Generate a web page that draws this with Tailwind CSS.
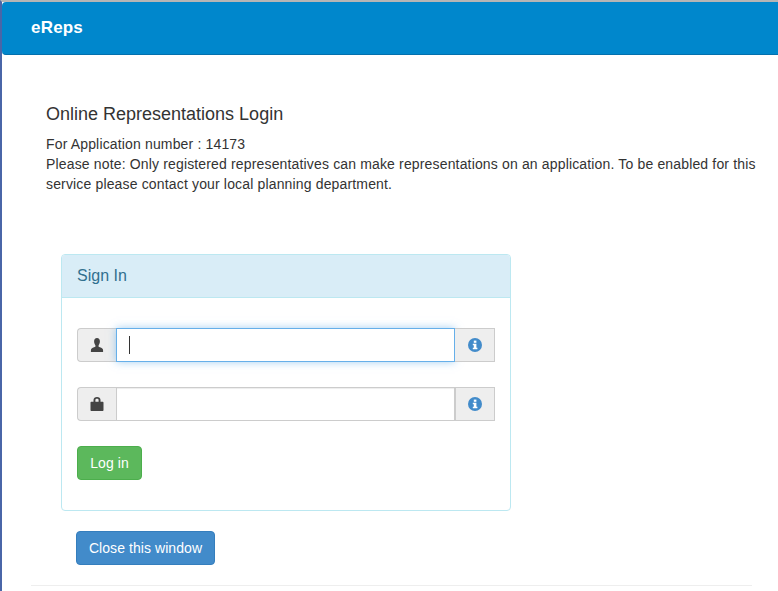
<!DOCTYPE html>
<html>
<head>
<meta charset="utf-8">
<script src="https://cdn.jsdelivr.net/npm/@tailwindcss/browser@4"></script>
</head>
<body class="h-[591px] w-[778px] overflow-hidden bg-white font-['Liberation_Sans',Arial,sans-serif] text-[14px] leading-[20px] text-[#333]">
<div class="flex h-[591px] flex-col border-l-2 border-l-[#4a66a8] border-t-2 border-t-[#b5b5b5]">
  <header class="flex h-[53px] shrink-0 items-center rounded-[4px] rounded-r-none border-b border-[#0370ad] bg-[#0087cc] pl-[29px]">
    <span class="text-[17px] font-bold tracking-[0.2px] text-white">eReps</span>
  </header>
  <main class="flex flex-col pt-[49px]">
    <div class="pl-[44px]">
      <h1 class="text-[18px] leading-[20px] font-normal text-[#333]">Online Representations Login</h1>
      <p class="mt-[10px] w-[725px] tracking-[0.155px] text-[#333]">For Application number : 14173<br>Please note: Only registered representatives can make representations on an application. To be enabled for this service please contact your local planning department.</p>
    </div>
    <section class="ml-[59px] mt-[60px] h-[257px] w-[450px] rounded-[4px] border border-[#bce8f1]">
      <div class="flex h-[43px] items-center rounded-t-[3px] border-b border-[#bce8f1] bg-[#d9edf7] pl-[15px] text-[16px] text-[#31708f]">Sign In</div>
      <div class="flex flex-col pl-[15px] pt-[30px]">
        <div class="flex h-[34px] w-[418px]">
          <span class="flex w-[39px] items-center justify-center rounded-l-[4px] border border-r-0 border-[#ccc] bg-[#eee]">
            <svg class="h-[14px] w-[14px]" viewBox="0 0 14 14"><path fill="#444" d="M7 0c1.900 0 2.900 1.400 2.900 3.500 0 1.500-.6 2.900-1.300 3.800v1.500c1.700.7 3.900 1.300 4.300 2.400.2.600.2 1.700.2 2.800H.9c0-1.100 0-2.200.2-2.800.4-1.100 2.600-1.700 4.300-2.400V7.300C4.700 6.400 4.100 5 4.100 3.500 4.100 1.400 5.100 0 7 0z"/></svg>
          </span>
          <div class="flex flex-1 items-center border border-[#66afe9] bg-white pl-[12px] shadow-[0_0_8px_rgba(102,175,233,0.6)]">
            <span class="h-[18px] w-px bg-[#333]"></span>
          </div>
          <span class="flex w-[40px] items-center justify-center border border-l-0 border-[#ccc] bg-[#eee]">
            <svg class="h-[14px] w-[14px]" viewBox="0 0 14 14"><circle cx="7" cy="7" r="7" fill="#428bca"/><rect x="5.800" y="2.600" width="2.600" height="2.200" fill="#fff"/><path fill="#fff" d="M4.800 5.800h3.600v4h1v1.500H4.800V9.800h1v-2.500h-1z"/></svg>
          </span>
        </div>
        <div class="mt-[25px] flex h-[34px] w-[418px]">
          <span class="flex w-[39px] items-center justify-center rounded-l-[4px] border border-r-0 border-[#ccc] bg-[#eee]">
            <svg class="h-[14px] w-[14px]" viewBox="0 0 14 14"><path fill="#444" d="M1.500 4.800h2V3C3.500 1.200 5 .1 7 .1s3.500 1.100 3.500 2.900v1.800h2c.6 0 1 .4 1 1V13c0 .6-.4 1-1 1h-11c-.6 0-1-.4-1-1V5.800c0-.6.400-1 1-1zM5.400 4.800h3.200V3.200C8.600 2.300 8 1.800 7 1.800s-1.600.5-1.600 1.400z"/></svg>
          </span>
          <div class="flex-1 border border-[#ccc] bg-white shadow-[inset_0_1px_1px_rgba(0,0,0,0.075)]"></div>
          <span class="flex w-[40px] items-center justify-center border border-[#ccc] bg-[#eee]">
            <svg class="h-[14px] w-[14px]" viewBox="0 0 14 14"><circle cx="7" cy="7" r="7" fill="#428bca"/><rect x="5.800" y="2.600" width="2.600" height="2.200" fill="#fff"/><path fill="#fff" d="M4.800 5.800h3.600v4h1v1.500H4.800V9.800h1v-2.500h-1z"/></svg>
          </span>
        </div>
        <button class="mt-[25px] h-[34px] w-[65px] rounded-[4px] border border-[#4cae4c] bg-[#5cb85c] text-center tracking-[0.1px] text-white">Log in</button>
      </div>
    </section>
    <button class="ml-[74px] mt-[20px] h-[34px] w-[139px] rounded-[4px] border border-[#357ebd] bg-[#428bca] text-center tracking-[0.07px] text-white">Close this window</button>
    <hr class="ml-[29px] mt-[20px] w-[721px] border-t border-[#eee]">
  </main>
</div>
</body>
</html>
